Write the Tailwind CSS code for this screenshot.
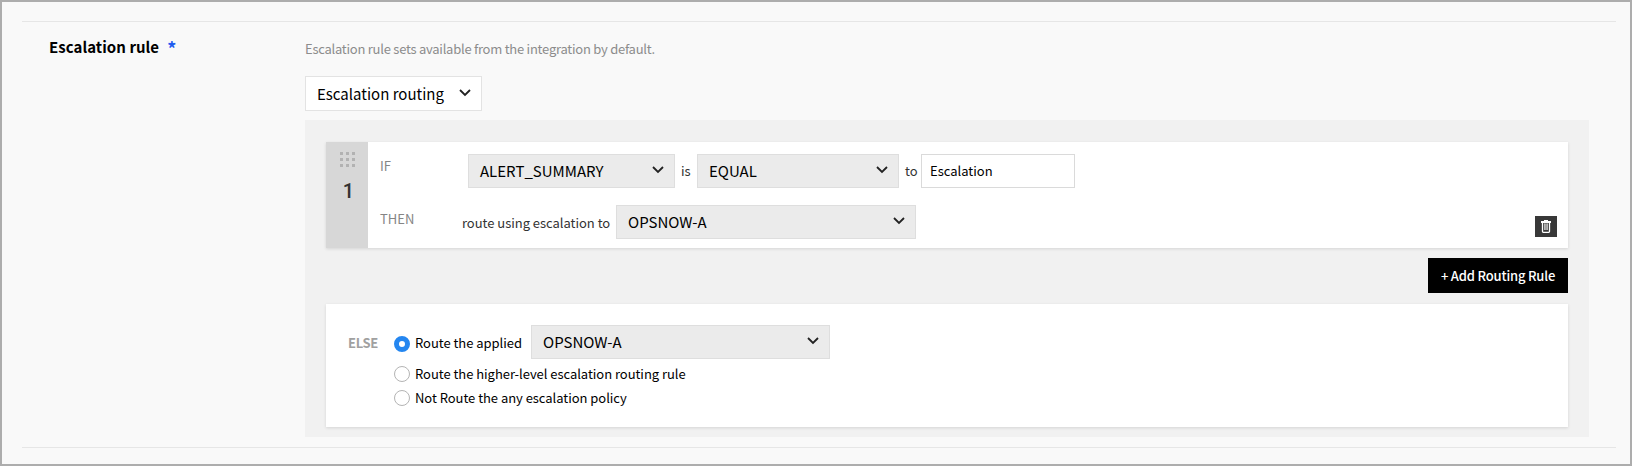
<!DOCTYPE html>
<html lang="en">
<head>
<meta charset="utf-8">
<title>Escalation rule</title>
<script src="https://cdn.jsdelivr.net/npm/@tailwindcss/browser@4"></script>
</head>
<body class="h-[466px] w-[1632px] overflow-hidden bg-[#f9f9f9] font-['Noto_Sans_CJK_KR','Noto_Sans_CJK_SC',sans-serif] text-black">
<main class="h-full border-2 border-[#adadad] pt-[19px] pr-[14px] pl-5">
  <section class="flex h-[427px] border-y border-[#e6e6e6] pl-[27px]">
    <h2 class="flex w-[256px] shrink-0 pt-[13px] text-[15px] leading-6 font-bold tracking-[0.05px] whitespace-nowrap">Escalation rule<span class="ml-[8px] text-lg leading-[26px] text-[#1f5cf0]">*</span></h2>
    <div class="w-[1284px]">
      <p class="h-[54px] pt-[17px] text-[13px] leading-5 tracking-[-0.25px] whitespace-nowrap text-[#8c8c8c]">Escalation rule sets available from the integration by default.</p>
      <button class="flex h-[35px] w-[177px] items-center justify-between border border-[#e3e3e3] bg-white pr-[10px] pl-[11px] text-[15px] leading-6 whitespace-nowrap">Escalation routing
        <svg class="-mt-[2px] h-[8px] w-[12px]" viewBox="0 0 12 8" fill="none" stroke="#222" stroke-width="1.800"><path d="M1 1l5 5 5-5"/></svg>
      </button>
      <div class="mt-[9px] h-[317px] bg-[#f1f1f1] px-[21px] pt-[22px]">
        <div class="flex h-[106px] bg-white shadow-[0_1px_3px_rgba(0,0,0,0.12)]">
          <div class="flex w-[42px] flex-col items-center bg-[#d7d7d7] pt-[10px]">
            <svg class="h-[15px] w-[15px]" viewBox="0 0 15 15" fill="#b2b2b2"><path d="M0 0h3v3H0zM6 0h3v3H6zM12 0h3v3h-3zM0 6h3v3H0zM6 6h3v3H6zM12 6h3v3h-3zM0 12h3v3H0zM6 12h3v3H6zM12 12h3v3h-3z"/></svg>
            <span class="mt-[14px] ml-[3px] font-['Roboto',sans-serif] text-[20px] leading-5 font-medium text-[#333]">1</span>
          </div>
          <div class="flex flex-1 flex-col gap-[17px] pt-3 pl-3 text-[13px] whitespace-nowrap text-[#333]">
            <div class="flex h-[34px] items-center">
              <span class="-mt-[11px] w-[88px] text-[#858585]">IF</span>
              <button class="flex h-[34px] w-[207px] items-center justify-between border border-[#dedede] bg-[#ebebeb] pr-[10px] pl-[11px] text-[15px] text-black">ALERT_SUMMARY
                <svg class="-mt-[2px] h-[8px] w-[12px]" viewBox="0 0 12 8" fill="none" stroke="#222" stroke-width="1.800"><path d="M1 1l5 5 5-5"/></svg>
              </button>
              <span class="w-[22px] pl-[6px]">is</span>
              <button class="flex h-[34px] w-[202px] items-center justify-between border border-[#dedede] bg-[#ebebeb] pr-[10px] pl-[11px] text-[15px] text-black">EQUAL
                <svg class="-mt-[2px] h-[8px] w-[12px]" viewBox="0 0 12 8" fill="none" stroke="#222" stroke-width="1.800"><path d="M1 1l5 5 5-5"/></svg>
              </button>
              <span class="w-[22px] pl-[6px]">to</span>
              <div class="flex h-[34px] w-[154px] items-center border border-[#dadada] bg-white pl-2 text-black">Escalation</div>
            </div>
            <div class="flex h-[34px] items-center">
              <span class="-mt-[6px] w-[82px] text-[#858585]">THEN</span>
              <span class="mt-px w-[154px] tracking-[-0.03px]">route using escalation to</span>
              <button class="flex h-[34px] w-[300px] items-center justify-between border border-[#dedede] bg-[#ebebeb] pr-[10px] pl-[11px] text-[15px] text-black">OPSNOW-A
                <svg class="-mt-[2px] h-[8px] w-[12px]" viewBox="0 0 12 8" fill="none" stroke="#222" stroke-width="1.800"><path d="M1 1l5 5 5-5"/></svg>
              </button>
            </div>
          </div>
          <button class="mt-[74px] mr-[11px] flex h-[21px] w-[22px] items-center justify-center bg-[#383838]">
            <svg class="h-[13px] w-[12px]" viewBox="0 0 12 13" fill="none"><path d="M4 0h4v1h3v2H1V1h3z" fill="#fff"/><path d="M2.500 3v8.500q0 .8.800.8h5.400q.8 0 .8-.8V3" stroke="#fff" stroke-width="1.300"/><path d="M4 3.500h4V10H4z" fill="#8a8a8a"/><path d="M4.500 3.500V10M6 3.500V10M7.500 3.500V10" stroke="#c4c4c4" stroke-width=".8"/></svg>
          </button>
        </div>
        <div class="flex h-[56px] justify-end pt-[10px]">
          <button class="flex h-[35px] w-[140px] items-center justify-center bg-black text-[13px] font-medium tracking-[-0.18px] whitespace-nowrap text-white">+ Add Routing Rule</button>
        </div>
        <div class="flex h-[123px] bg-white pt-[21px] pl-[22px] text-[13px] tracking-[-0.04px] whitespace-nowrap shadow-[0_1px_3px_rgba(0,0,0,0.12)]">
          <span class="w-[46px] pt-[8px] leading-5 font-bold tracking-[-0.3px] text-[#a0a0a0]">ELSE</span>
          <div>
            <label class="flex h-[34px] items-center"><span class="mt-[3px] mr-[5px] h-4 w-4 rounded-full border-[5.500px] border-[#2486f0] bg-white"></span><span class="mt-[2px] w-[116px]">Route the applied</span>
              <button class="flex h-[34px] w-[299px] items-center justify-between border border-[#dedede] bg-[#ebebeb] pr-[10px] pl-[11px] text-[15px] tracking-normal text-black">OPSNOW-A
                <svg class="-mt-[2px] h-[8px] w-[12px]" viewBox="0 0 12 8" fill="none" stroke="#222" stroke-width="1.800"><path d="M1 1l5 5 5-5"/></svg>
              </button></label>
            <label class="mt-[3px] flex h-6 items-center"><span class="mr-[5px] h-4 w-4 rounded-full border border-[#b4b4b4] bg-white"></span>Route the higher-level escalation routing rule</label>
            <label class="flex h-[23px] items-center"><span class="mr-[5px] h-4 w-4 rounded-full border border-[#b4b4b4] bg-white"></span>Not Route the any escalation policy</label>
          </div>
        </div>
      </div>
    </div>
  </section>
</main>
</body>
</html>
